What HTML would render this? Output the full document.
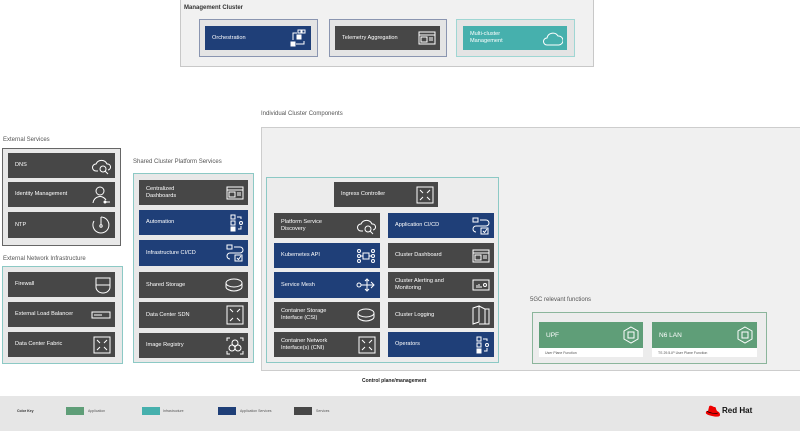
<!DOCTYPE html>
<html><head><meta charset="utf-8"><style>
*{margin:0;padding:0;box-sizing:border-box}
body{width:800px;height:431px;background:#fff;position:relative;overflow:hidden;font-family:"Liberation Sans",sans-serif}
.a{position:absolute}
.lbl{position:absolute;font-size:6px;color:#555;white-space:nowrap}
.c{position:absolute;color:#fff;font-size:5.6px;line-height:7px;display:flex;align-items:center;padding-left:7px}
.c svg{position:absolute;right:4px;top:50%;transform:translateY(-50%)}
.d{background:#474747}.b{background:#1f3f78}.t{background:#46b0ad}.g{background:#5f9e78}
</style></head><body>
<!-- management cluster -->
<div class="a" style="left:180px;top:-1px;width:414px;height:68px;background:#f1f1f1;border:1px solid #c8c8c8"></div>
<div class="lbl" style="left:184px;top:5px;font-weight:bold;color:#333;font-size:6px">Management Cluster</div>
<div class="a" style="left:199px;top:19px;width:119px;height:38px;background:#e4e4e4;border:1px solid #8a95b0"></div>
<div class="c b" style="left:205px;top:26px;width:106px;height:24px">Orchestration<svg width="18" height="18" viewBox="0 0 18 18" fill="none" stroke="#fff" stroke-width="1"><rect x="9" y="1" width="3" height="3"/><rect x="13" y="1" width="3" height="3"/><rect x="8" y="6" width="4" height="4" fill="#fff"/><rect x="2" y="13" width="4" height="4" fill="#fff"/><path d="M8 4H4v7M7 15h8v-3"/></svg></div>
<div class="a" style="left:329px;top:19px;width:118px;height:38px;background:#e4e4e4;border:1px solid #8a95b0"></div>
<div class="c d" style="left:335px;top:26px;width:105px;height:24px">Telemetry Aggregation<svg width="18" height="14" viewBox="0 0 18 14" fill="none" stroke="#fff"><rect x="1" y="1" width="16" height="12"/><path d="M1 4h16M3 6h6v5H3zM11 7h4M11 9h4"/></svg></div>
<div class="a" style="left:456px;top:19px;width:119px;height:38px;background:#e4e4e4;border:1px solid #9fd6d3"></div>
<div class="c t" style="left:463px;top:26px;width:104px;height:24px">Multi-cluster<br>Management<svg width="20" height="18" viewBox="0 0 20 18" fill="none" stroke="#fff"><path d="M4 16a3 3 0 0 1 0-7 6 6 0 0 1 11-2 4 4 0 0 1 1 9z"/></svg></div>

<div class="lbl" style="left:261px;top:111px">Individual Cluster Components</div>
<div class="a" style="left:261px;top:127px;width:540px;height:244px;background:#f0f0f0;border:1px solid #cdcdcd"></div>

<!-- external services -->
<div class="lbl" style="left:3px;top:137px">External Services</div>
<div class="a" style="left:2px;top:148px;width:119px;height:98px;background:#e8e8e8;border:1px solid #666"></div>
<div class="c d" style="left:8px;top:153px;width:107px;height:25px">DNS<svg width="20" height="18" viewBox="0 0 20 18" fill="none" stroke="#fff"><path d="M7 14H5a3 3 0 0 1 0-7 6 6 0 0 1 11 0 3 3 0 0 1 1 6"/><circle cx="12" cy="12" r="3"/><path d="M14 14l3 3"/></svg></div>
<div class="c d" style="left:8px;top:182px;width:107px;height:25px">Identity Management<svg width="20" height="20" viewBox="0 0 20 20" fill="none" stroke="#fff"><circle cx="9" cy="6" r="4"/><path d="M2 18a7 7 0 0 1 13-3M13 17h6"/><circle cx="14" cy="17" r="1" fill="#fff"/></svg></div>
<div class="c d" style="left:8px;top:212px;width:107px;height:26px">NTP<svg width="20" height="20" viewBox="0 0 20 20" fill="none" stroke="#fff"><path d="M10 2a8 8 0 1 1-7 4"/><path d="M10 2v8"/><circle cx="10" cy="11" r="1.2"/></svg></div>

<div class="lbl" style="left:3px;top:256px">External Network Infrastructure</div>
<div class="a" style="left:2px;top:266px;width:121px;height:98px;background:#e8e8e8;border:1px solid #8cc9c5"></div>
<div class="c d" style="left:8px;top:272px;width:107px;height:25px">Firewall<svg width="16" height="18" viewBox="0 0 16 18" fill="none" stroke="#fff"><path d="M1 2h14v9a7 6 0 0 1-14 0zM1 9h14"/></svg></div>
<div class="c d" style="left:8px;top:302px;width:107px;height:25px">External Load Balancer<svg width="20" height="8" viewBox="0 0 20 8" fill="none" stroke="#fff"><rect x="1" y="1" width="18" height="6"/><path d="M4 3v2M6 3v2M8 3v2M10 3v2"/></svg></div>
<div class="c d" style="left:8px;top:332px;width:107px;height:25px">Data Center Fabric<svg width="18" height="18" viewBox="0 0 18 18" fill="none" stroke="#fff"><rect x="1" y="1" width="16" height="16"/><path d="M4 4l3 3M14 4l-3 3M4 14l3-3M14 14l-3-3"/></svg></div>

<!-- shared -->
<div class="lbl" style="left:133px;top:159px">Shared Cluster Platform Services</div>
<div class="a" style="left:133px;top:173px;width:121px;height:190px;background:#e8e8e8;border:1px solid #8cc9c5"></div>
<div class="c d" style="left:139px;top:180px;width:109px;height:25px">Centralized<br>Dashboards<svg width="18" height="14" viewBox="0 0 18 14" fill="none" stroke="#fff"><rect x="1" y="1" width="16" height="12"/><path d="M1 4h16M3 6h6v5H3zM11 7h4M11 9h4"/></svg></div>
<div class="c b" style="left:139px;top:210px;width:109px;height:25px">Automation<svg width="14" height="18" viewBox="0 0 14 18" fill="none" stroke="#fff"><rect x="1" y="1" width="4" height="4"/><rect x="1" y="7" width="4" height="4"/><rect x="1" y="13" width="4" height="4" fill="#fff"/><path d="M7 3h4v2"/><circle cx="11" cy="9" r="1.5"/><path d="M11 12v3H8"/></svg></div>
<div class="c b" style="left:139px;top:240px;width:109px;height:26px">Infrastructure CI/CD<svg width="18" height="18" viewBox="0 0 18 18" fill="none" stroke="#fff"><rect x="1" y="1" width="5" height="4"/><path d="M8 3h6a3 3 0 0 1 0 6H4a3 3 0 0 0 0 6"/><rect x="9" y="11" width="7" height="6"/><path d="M11 14l1.5 1.5L15 12"/></svg></div>
<div class="c d" style="left:139px;top:272px;width:109px;height:26px">Shared Storage<svg width="20" height="14" viewBox="0 0 20 14" fill="none" stroke="#fff"><ellipse cx="10" cy="5" rx="8" ry="4"/><path d="M2 5v4c0 2 4 4 8 4s8-2 8-4V5"/></svg></div>
<div class="c d" style="left:139px;top:302px;width:109px;height:26px">Data Center SDN<svg width="18" height="20" viewBox="0 0 18 20" fill="none" stroke="#fff"><rect x="1" y="1" width="16" height="18"/><path d="M4 4l3 3M14 4l-3 3M4 16l3-3M14 16l-3-3"/></svg></div>
<div class="c d" style="left:139px;top:333px;width:109px;height:25px">Image Registry<svg width="18" height="18" viewBox="0 0 18 18" fill="none" stroke="#fff"><path d="M1 4V1h3M14 1h3v3M17 14v3h-3M4 17H1v-3"/><circle cx="9" cy="6" r="3"/><circle cx="6" cy="11" r="3"/><circle cx="12" cy="11" r="3"/></svg></div>

<!-- inner cluster -->
<div class="a" style="left:266px;top:177px;width:233px;height:186px;background:#ececec;border:1px solid #8cc9c5"></div>
<div class="c d" style="left:334px;top:182px;width:104px;height:25px">Ingress Controller<svg width="18" height="18" viewBox="0 0 18 18" fill="none" stroke="#fff"><rect x="1" y="1" width="16" height="16"/><path d="M4 4l3 3M14 4l-3 3M4 14l3-3M14 14l-3-3"/></svg></div>
<div class="c d" style="left:274px;top:213px;width:106px;height:25px">Platform Service<br>Discovery<svg width="20" height="18" viewBox="0 0 20 18" fill="none" stroke="#fff"><path d="M7 14H5a3 3 0 0 1 0-7 6 6 0 0 1 11 0 3 3 0 0 1 1 6"/><circle cx="12" cy="12" r="3"/><path d="M14 14l3 3"/></svg></div>
<div class="c b" style="left:274px;top:243px;width:106px;height:25px">Kubernetes API<svg width="20" height="16" viewBox="0 0 20 16" fill="none" stroke="#fff"><rect x="7" y="5" width="6" height="6"/><circle cx="3" cy="3" r="1.5"/><circle cx="3" cy="8" r="1.5"/><circle cx="3" cy="13" r="1.5"/><circle cx="17" cy="3" r="1.5"/><circle cx="17" cy="8" r="1.5"/><circle cx="17" cy="13" r="1.5"/><path d="M4.5 8H7M13 8h2.5"/></svg></div>
<div class="c b" style="left:274px;top:272px;width:106px;height:26px">Service Mesh<svg width="20" height="16" viewBox="0 0 20 16" fill="none" stroke="#fff"><circle cx="3" cy="8" r="2"/><path d="M5 8h13M15 5l3 3-3 3M11 8V2M9 4l2-2 2 2M11 8v6M9 12l2 2 2-2"/></svg></div>
<div class="c d" style="left:274px;top:302px;width:106px;height:26px">Container Storage<br>Interface (CSI)<svg width="20" height="14" viewBox="0 0 20 14" fill="none" stroke="#fff"><ellipse cx="10" cy="5" rx="8" ry="4"/><path d="M2 5v4c0 2 4 4 8 4s8-2 8-4V5"/></svg></div>
<div class="c d" style="left:274px;top:332px;width:106px;height:25px">Container Network<br>Interface(s) (CNI)<svg width="18" height="18" viewBox="0 0 18 18" fill="none" stroke="#fff"><rect x="1" y="1" width="16" height="16"/><path d="M4 4l3 3M14 4l-3 3M4 14l3-3M14 14l-3-3"/></svg></div>
<div class="c b" style="left:388px;top:213px;width:106px;height:25px">Application CI/CD<svg width="18" height="18" viewBox="0 0 18 18" fill="none" stroke="#fff"><rect x="1" y="1" width="5" height="4"/><path d="M8 3h6a3 3 0 0 1 0 6H4a3 3 0 0 0 0 6"/><rect x="9" y="11" width="7" height="6"/><path d="M11 14l1.5 1.5L15 12"/></svg></div>
<div class="c d" style="left:388px;top:243px;width:106px;height:25px">Cluster Dashboard<svg width="18" height="14" viewBox="0 0 18 14" fill="none" stroke="#fff"><rect x="1" y="1" width="16" height="12"/><path d="M1 4h16M3 6h6v5H3zM11 7h4M11 9h4"/></svg></div>
<div class="c d" style="left:388px;top:272px;width:106px;height:26px">Cluster Alerting and<br>Monitoring<svg width="18" height="12" viewBox="0 0 18 12" fill="none" stroke="#fff"><rect x="1" y="1" width="16" height="10"/><path d="M4 8h6M5 7v-1M7 7V5"/><circle cx="13" cy="6" r="1.5"/></svg></div>
<div class="c d" style="left:388px;top:302px;width:106px;height:26px">Cluster Logging<svg width="18" height="20" viewBox="0 0 18 20" fill="none" stroke="#fff"><path d="M1 3l6-2v16l-6 2zM7 1l6 3v15M13 4h4v15H7"/></svg></div>
<div class="c b" style="left:388px;top:332px;width:106px;height:25px">Operators<svg width="14" height="18" viewBox="0 0 14 18" fill="none" stroke="#fff"><rect x="1" y="1" width="4" height="4"/><rect x="1" y="7" width="4" height="4"/><rect x="1" y="13" width="4" height="4" fill="#fff"/><path d="M7 3h4v2"/><circle cx="11" cy="9" r="1.5"/><path d="M11 12v3H8"/></svg></div>

<!-- 5GC -->
<div class="lbl" style="left:530px;top:297px">5GC relevant functions</div>
<div class="a" style="left:532px;top:312px;width:235px;height:52px;background:#ececec;border:1px solid #8bb59b"></div>
<div class="c g" style="left:539px;top:322px;width:104px;height:26px;font-size:6.5px">UPF<svg width="16" height="18" viewBox="0 0 16 18" fill="none" stroke="#fff"><path d="M8 1l7 4v8l-7 4-7-4V5z"/><rect x="5" y="6" width="6" height="6"/></svg></div>
<div class="a" style="left:539px;top:348px;width:104px;height:9px;background:#fff;font-size:3.5px;color:#555;padding:3px 0 0 6px">User Plane Function</div>
<div class="c g" style="left:652px;top:322px;width:105px;height:26px;font-size:6.5px">N6 LAN<svg width="16" height="18" viewBox="0 0 16 18" fill="none" stroke="#fff"><path d="M8 1l7 4v8l-7 4-7-4V5z"/><rect x="5" y="6" width="6" height="6"/></svg></div>
<div class="a" style="left:652px;top:348px;width:105px;height:9px;background:#fff;font-size:3.5px;color:#555;padding:3px 0 0 6px">TS 29.5-IP User Plane Function</div>

<div class="lbl" style="left:362px;top:378px;font-weight:bold;color:#222;font-size:5px">Control plane/management</div>

<!-- footer -->
<div class="a" style="left:0;top:396px;width:800px;height:35px;background:#e6e6e6"></div>
<div class="lbl" style="left:17px;top:409px;font-size:3.5px;font-weight:bold;color:#333">Color Key</div>
<div class="a g" style="left:66px;top:407px;width:18px;height:8px"></div><div class="lbl" style="left:88px;top:409px;font-size:3.5px">Application</div>
<div class="a t" style="left:142px;top:407px;width:18px;height:8px"></div><div class="lbl" style="left:163px;top:409px;font-size:3.5px">Infrastructure</div>
<div class="a b" style="left:218px;top:407px;width:18px;height:8px"></div><div class="lbl" style="left:240px;top:409px;font-size:3.5px">Application Services</div>
<div class="a d" style="left:294px;top:407px;width:18px;height:8px"></div><div class="lbl" style="left:316px;top:409px;font-size:3.5px">Services</div>
<svg class="a" style="left:705px;top:405px" width="16" height="13" viewBox="0 0 16 13"><path d="M3 6l1-4c0-1 1-2 3-1l2 1c1 0 2 0 2 2l1 2c2 1 3 2 3 4s-4 2-8 1S0 9 1 7c0-1 1-1 2-1z" fill="#e00"/><path d="M2 6c2 2 8 3 11 2" stroke="#000" stroke-width=".6" fill="none"/></svg>
<div class="lbl" style="left:722px;top:406px;font-size:8px;font-weight:bold;color:#111">Red Hat</div>
</body></html>
